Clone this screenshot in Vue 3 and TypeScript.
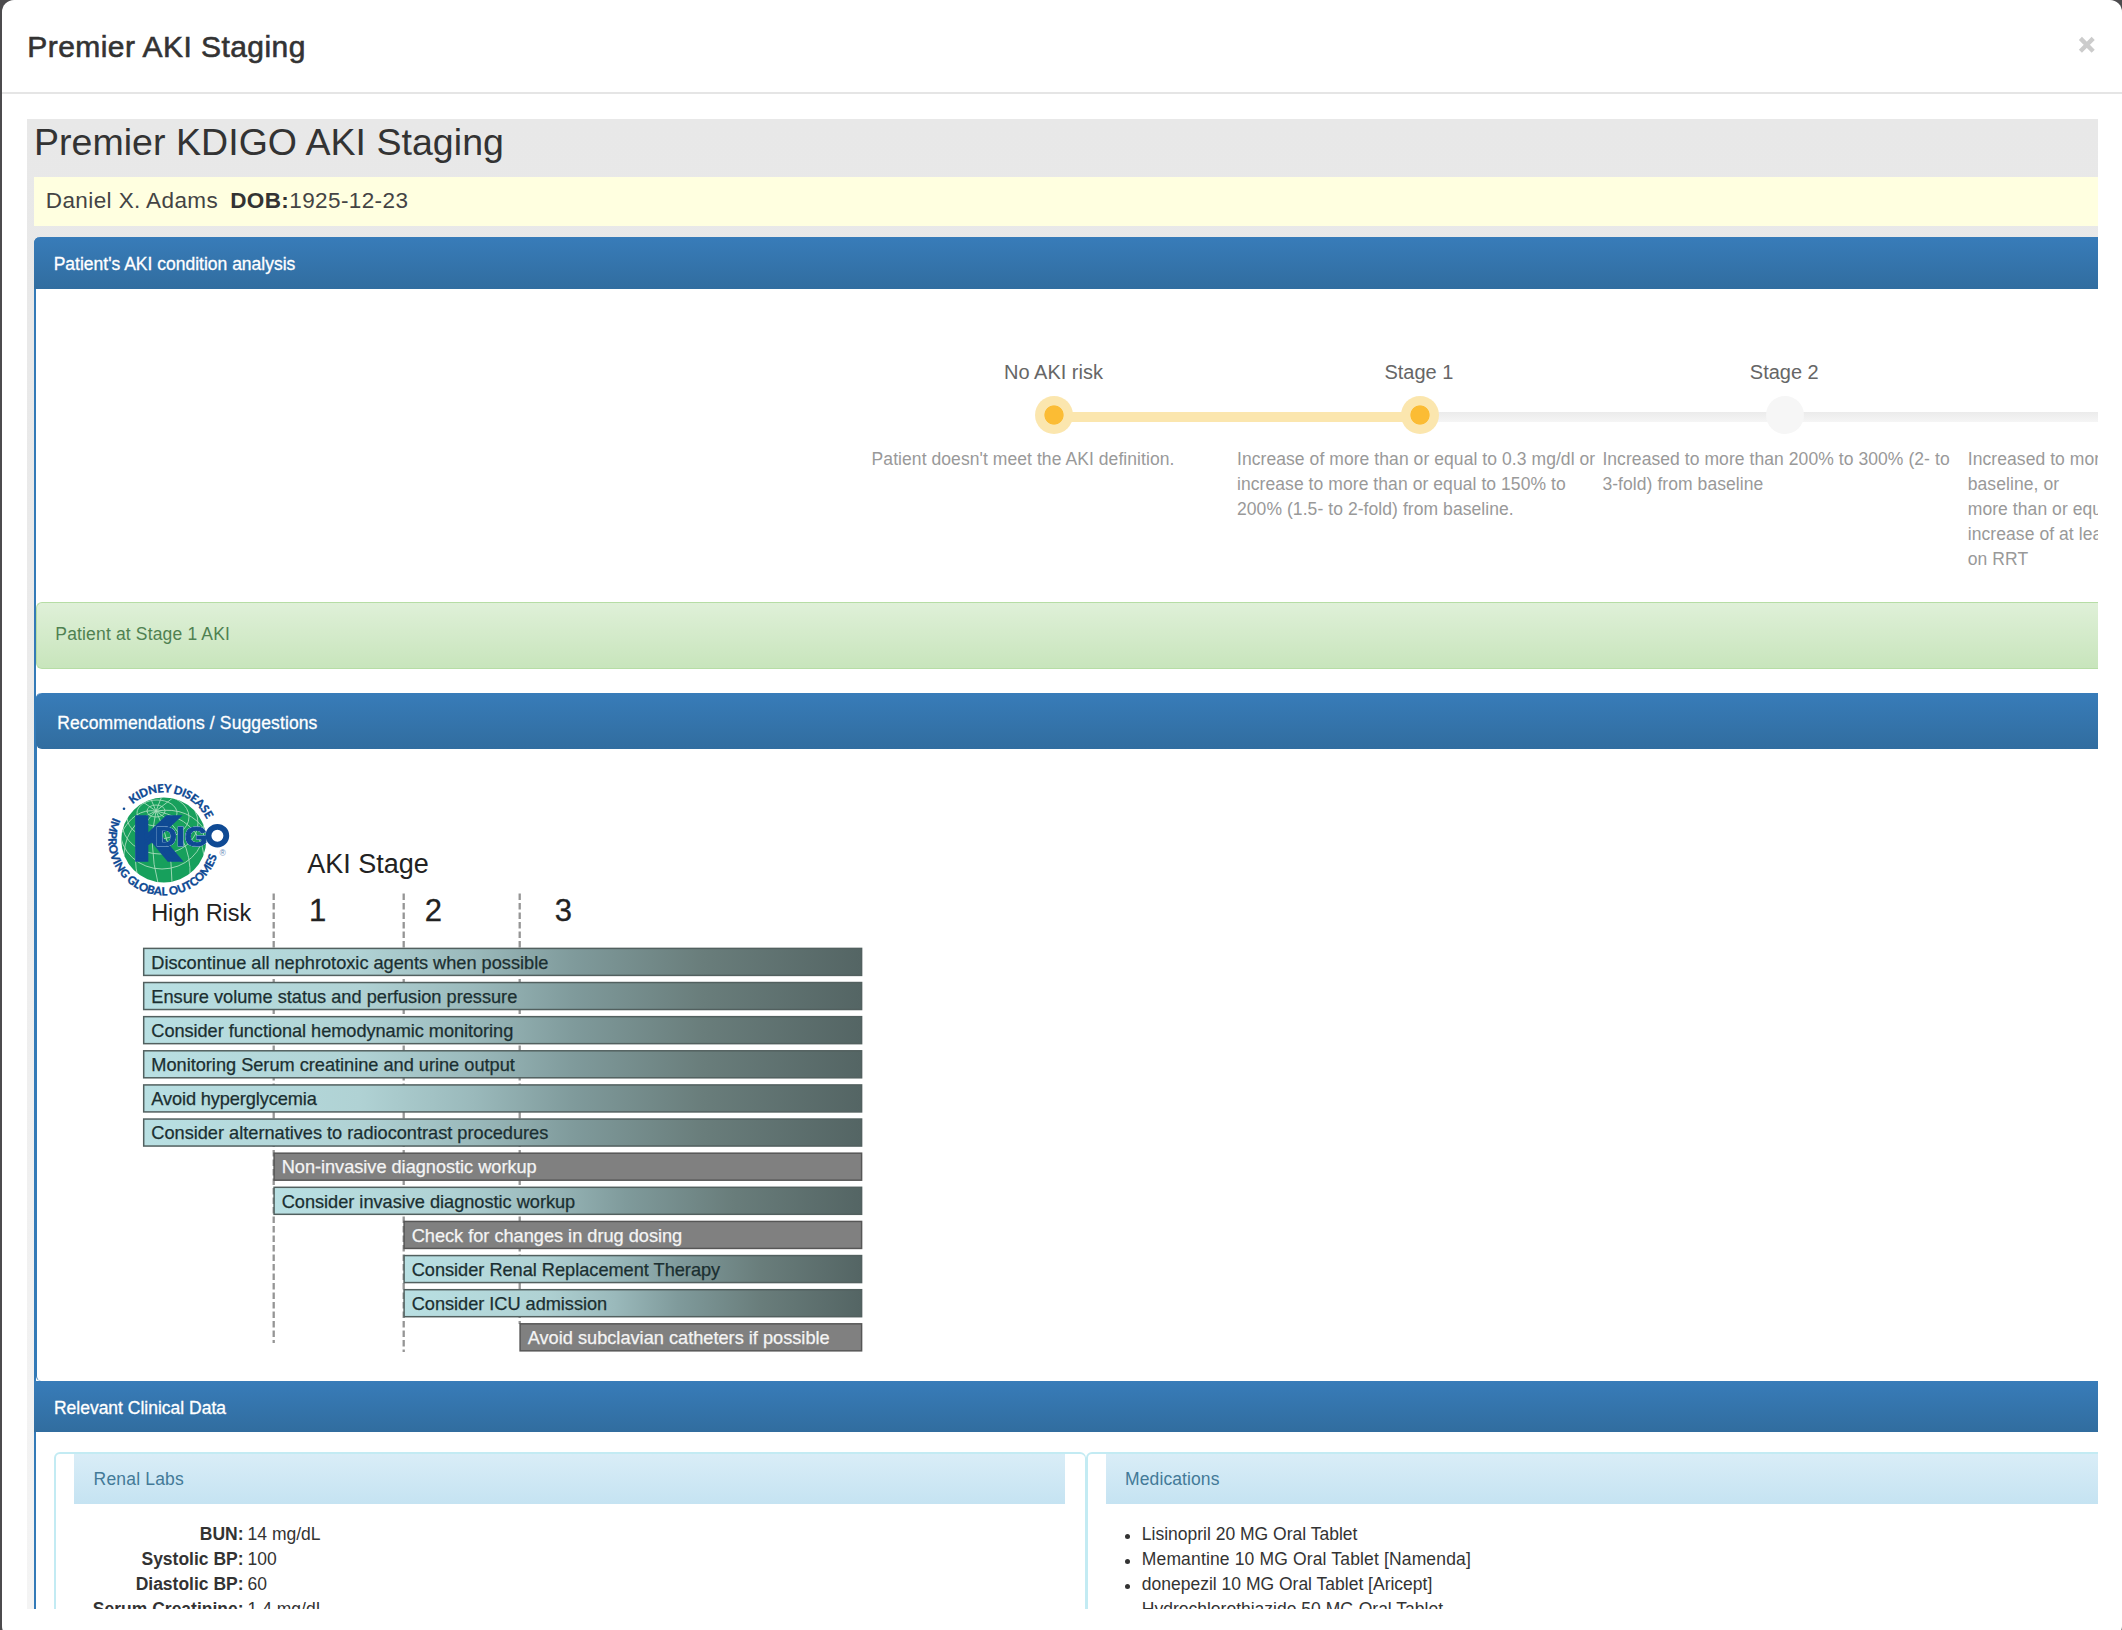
<script setup lang="ts">
interface Stage {
  title: string
  lines: string[]
  reached: boolean
  joined: boolean
}

interface ChartBar {
  label: string
  start: number
  width: number
  dark?: boolean
}

const stages: Stage[] = [
  { title: 'No AKI risk', lines: ["Patient doesn't meet the AKI definition."], reached: true, joined: true },
  {
    title: 'Stage 1',
    lines: [
      'Increase of more than or equal to 0.3 mg/dl or',
      'increase to more than or equal to 150% to',
      '200% (1.5- to 2-fold) from baseline.',
    ],
    reached: true,
    joined: false,
  },
  {
    title: 'Stage 2',
    lines: ['Increased to more than 200% to 300% (2- to', '3-fold) from baseline'],
    reached: false,
    joined: false,
  },
  {
    title: 'Stage 3',
    lines: [
      'Increased to more than 300% (3-fold) from',
      'baseline, or',
      'more than or equal to 4.0 mg/dl with an acute',
      'increase of at least 0.5 mg/dl or',
      'on RRT',
    ],
    reached: false,
    joined: false,
  },
]

const chartRight = 862.3
const barTop = (i: number): number => 947.7 + i * 34.13

const bars: ChartBar[] = [
  { label: 'Discontinue all nephrotoxic agents when possible', start: 143, width: 397 },
  { label: 'Ensure volume status and perfusion pressure', start: 143, width: 366 },
  { label: 'Consider functional hemodynamic monitoring', start: 143, width: 362 },
  { label: 'Monitoring Serum creatinine and urine output', start: 143, width: 363.5 },
  { label: 'Avoid hyperglycemia', start: 143, width: 165.5 },
  { label: 'Consider alternatives to radiocontrast procedures', start: 143, width: 397 },
  { label: 'Non-invasive diagnostic workup', start: 273.4, width: 255, dark: true },
  { label: 'Consider invasive diagnostic workup', start: 273.4, width: 293.5 },
  { label: 'Check for changes in drug dosing', start: 403.4, width: 270.5, dark: true },
  { label: 'Consider Renal Replacement Therapy', start: 403.4, width: 308.5 },
  { label: 'Consider ICU admission', start: 403.4, width: 195.5 },
  { label: 'Avoid subclavian catheters if possible', start: 519.4, width: 302, dark: true },
]

const guides = [
  { x: 273.7, end: 1343 },
  { x: 403.7, end: 1352 },
  { x: 519.7, end: 1324 },
]

const labs = [
  { name: 'BUN:', value: '14 mg/dL' },
  { name: 'Systolic BP:', value: '100' },
  { name: 'Diastolic BP:', value: '60' },
  { name: 'Serum Creatinine:', value: '1.4 mg/dL' },
]

const medications = [
  'Lisinopril 20 MG Oral Tablet',
  'Memantine 10 MG Oral Tablet [Namenda]',
  'donepezil 10 MG Oral Tablet [Aricept]',
  'Hydrochlorothiazide 50 MG Oral Tablet',
]
</script>

<template>
  <div class="backdrop">
    <section class="modal">
      <header class="modal-header">
        <h2>Premier AKI Staging</h2>
        <button class="close" aria-label="Close">
          <svg width="18" height="18" viewBox="0 0 18 18">
            <path d="M2.4 2.4 L15.2 15.2 M15.2 2.4 L2.4 15.2" stroke="#ccc" stroke-width="4.4" />
          </svg>
        </button>
      </header>

      <main class="viewport">
        <h1>Premier KDIGO AKI Staging</h1>
        <div class="patient">
          <span class="name">Daniel X. Adams</span><b>DOB:</b><span>1925-12-23</span>
        </div>

        <div class="panel">
          <div class="panel-heading first">Patient's AKI condition analysis</div>

          <div class="steps">
            <div v-for="s in stages" :key="s.title" class="step">
              <div class="step-title">{{ s.title }}</div>
              <div class="node-row">
                <span class="half" :class="{ none: s.title === 'No AKI risk', on: s.title === 'Stage 1' }"></span>
                <span class="node" :class="{ on: s.reached }"></span>
                <span class="half" :class="{ on: s.joined }"></span>
              </div>
              <p><span v-for="l in s.lines" :key="l">{{ l }}</span></p>
            </div>
          </div>

          <div class="alert">Patient at Stage 1 AKI</div>

          <div class="advice">
            <div class="panel-heading nested">Recommendations / Suggestions</div>
            <svg class="chart" width="900" height="632" viewBox="37 749 900 632">
              <defs>
                <linearGradient id="teal">
                  <stop offset="0" stop-color="#b9e0e3" />
                  <stop offset="0.3" stop-color="#b0d2d4" />
                  <stop offset="0.46" stop-color="#9ab9bb" />
                  <stop offset="0.6" stop-color="#7f9a9b" />
                  <stop offset="0.78" stop-color="#697d7b" />
                  <stop offset="1" stop-color="#546564" />
                </linearGradient>
                <clipPath id="globe"><circle cx="163.8" cy="840" r="42.5" /></clipPath>
                <path id="ring-top" d="M132.6 804.2 A47.5 47.5 0 0 1 207.5 821.4" />
                <path id="ring-bottom" d="M113.1 817.4 A55.5 55.5 0 1 0 217.4 854.4" />
              </defs>

              <g class="logo">
                <circle cx="163.8" cy="840" r="42.5" fill="#17a05c" />
                <g clip-path="url(#globe)" fill="none" stroke="#a9dcbc" stroke-width="0.9">
                  <ellipse cx="156" cy="811" rx="9" ry="6" />
                  <ellipse cx="157" cy="813" rx="20" ry="13" />
                  <ellipse cx="158" cy="817" rx="31" ry="22" />
                  <ellipse cx="160" cy="823" rx="38" ry="31" />
                  <ellipse cx="162" cy="830" rx="42" ry="39" />
                  <path d="M156 811 Q148 845 158 883 M156 811 Q172 842 172 883 M156 811 Q192 835 190 878 M156 811 Q200 820 204 856 M156 811 Q190 806 206 832 M156 811 Q128 838 138 878 M156 811 Q122 825 124 862 M156 811 Q134 808 121 834 M156 811 L150 797 M156 811 L162 796 M156 811 L174 797 M156 811 L140 800" />
                </g>
                <text class="big-k" x="132.4" y="860" textLength="48" lengthAdjust="spacingAndGlyphs">K</text>
                <text class="digo" x="155.5" y="845.6" textLength="52" lengthAdjust="spacingAndGlyphs">DIG</text>
                <circle cx="217.4" cy="835.7" r="8.9" fill="#fff" stroke="#0f4a94" stroke-width="5.8" />
                <text class="ring"><textPath href="#ring-top" textLength="87" lengthAdjust="spacing">KIDNEY DISEASE</textPath></text>
                <text class="ring"><textPath href="#ring-bottom" textLength="181" lengthAdjust="spacing">IMPROVING GLOBAL OUTCOMES</textPath></text>
                <circle cx="124" cy="808.7" r="1.3" fill="#0f4a94" />
                <text class="reg" x="219.6" y="856">®</text>
              </g>

              <text class="t-stage" x="307.3" y="872.5" textLength="121.5">AKI Stage</text>
              <text class="t-risk" x="151.2" y="921" textLength="100">High Risk</text>
              <text class="t-num" x="309" y="921.4">1</text>
              <text class="t-num" x="424.8" y="921.4">2</text>
              <text class="t-num" x="554.8" y="921.4">3</text>

              <line
                v-for="g in guides"
                :key="g.x"
                :x1="g.x"
                :x2="g.x"
                y1="893.5"
                :y2="g.end"
                stroke="#959595"
                stroke-width="2.3"
                stroke-dasharray="6.5 3"
              />

              <g v-for="(b, i) in bars" :key="b.label">
                <rect
                  :x="b.start + 0.7"
                  :y="barTop(i) + 0.7"
                  :width="chartRight - b.start - 1.4"
                  height="27"
                  :fill="b.dark ? '#808080' : 'url(#teal)'"
                  :stroke="b.dark ? '#565656' : '#52605f'"
                  stroke-width="1.5"
                />
                <text
                  :class="['t-bar', { light: b.dark }]"
                  :x="b.start + 8.3"
                  :y="barTop(i) + 20.9"
                  :textLength="b.width"
                >{{ b.label }}</text>
              </g>
            </svg>
          </div>

          <div class="panel-heading data">Relevant Clinical Data</div>
          <div class="cards">
            <div class="card labs">
              <div class="card-heading">Renal Labs</div>
              <dl>
                <div v-for="l in labs" :key="l.name">
                  <dt>{{ l.name }}</dt>
                  <dd>{{ l.value }}</dd>
                </div>
              </dl>
            </div>
            <div class="card meds">
              <div class="card-heading">Medications</div>
              <ul>
                <li v-for="m in medications" :key="m"><i></i>{{ m }}</li>
              </ul>
            </div>
          </div>
        </div>
      </main>
    </section>
  </div>
</template>

<style>
body {
  margin: 0;
  background: #4c4b4d;
}
</style>

<style scoped>
* {
  box-sizing: border-box;
}
.backdrop {
  width: 2122px;
  height: 1630px;
  overflow: hidden;
  padding-left: 2px;
  background: #4c4b4d;
  font-family: 'Liberation Sans', Arial, sans-serif;
  font-size: 17.5px;
  line-height: 25px;
  color: #333;
}
.modal {
  height: 1638px;
  background: #fff;
  border-radius: 12px;
}
.modal-header {
  display: flex;
  justify-content: space-between;
  align-items: center;
  height: 94px;
  padding: 0 26px 0 25.3px;
  border-bottom: 2px solid #e5e5e5;
}
h2 {
  margin: 0;
  padding-top: 2px;
  font-size: 30px;
  font-weight: 400;
  line-height: 92px;
  letter-spacing: 0.44px;
  -webkit-text-stroke: 0.6px #333;
}
.close {
  display: flex;
  margin: 0 0 3px;
  padding: 0;
  border: 0;
  background: none;
}
.viewport {
  width: 2071px;
  height: 1490px;
  margin: 25px 0 0 25px;
  padding-left: 7px;
  overflow: hidden;
  background: linear-gradient(#e8e8e8, #eaeaea 30%, #f4f4f4);
}
h1 {
  height: 58px;
  margin: 0;
  font-size: 37.5px;
  font-weight: 400;
  line-height: 47px;
  letter-spacing: 0.04px;
}
.patient {
  display: flex;
  height: 48.5px;
  padding-left: 11.8px;
  background: #ffffe0;
  font-size: 22.5px;
  line-height: 48px;
  letter-spacing: 0.4px;
  color: #444;
}
.patient .name {
  margin-right: 12px;
}
.patient b {
  color: #333;
}
.panel {
  height: 1500px;
  margin-top: 11.5px;
  border-left: 2px solid #337ab7;
  border-radius: 6px 0 0 0;
  background: #fff;
}
.panel-heading {
  display: flex;
  align-items: center;
  padding-top: 3px;
  color: #fff;
  background: linear-gradient(#387cb9, #316d9f);
  -webkit-text-stroke: 0.3px #fff;
}
.first {
  height: 52px;
  margin-left: -2px;
  padding-left: 19.7px;
  border-radius: 6px 0 0 0;
}
.steps {
  display: flex;
  height: 313px;
  padding: 68px 0 0 835.6px;
}
.step {
  flex: none;
  width: 365.4px;
}
.step-title {
  padding-right: 1.6px;
  font-size: 20px;
  line-height: 30px;
  text-align: center;
  color: #666;
}
.node-row {
  display: flex;
  align-items: center;
  height: 38px;
  margin-top: 8.7px;
}
.half {
  flex: 1;
  height: 10px;
  margin: 4px -3px 0;
  background: linear-gradient(#ebebeb, #f5f5f5);
}
.half:first-child {
  margin-left: 0;
}
.half:last-child {
  margin-right: 0;
}
.half.on {
  background: #fbe6ae;
}
.half.none {
  background: none;
}
.node {
  z-index: 1;
  width: 38px;
  height: 38px;
  border-radius: 50%;
  background: #f6f6f6;
}
.node.on {
  background: radial-gradient(circle, #fbbc34 9.2px, #fbe6ae 10px);
}
.step p {
  display: flex;
  flex-direction: column;
  margin: 13.6px 0 0;
  white-space: nowrap;
  letter-spacing: 0.07px;
  color: #999;
}
.alert {
  display: flex;
  align-items: center;
  height: 67.3px;
  padding: 0 0 2px 18.3px;
  border: 1.4px solid #b6dda5;
  border-right: 0;
  border-radius: 6px 0 0 6px;
  background: linear-gradient(#dff0d8, #c8e5bc);
  color: #4f8151;
  letter-spacing: 0.16px;
}
.advice {
  height: 687.3px;
  margin-top: 24.2px;
  border-left: 1px solid #337ab7;
  border-radius: 5px 0 0 5px;
}
.nested {
  height: 55.5px;
  margin-left: -1px;
  padding: 4px 0 0 21.2px;
  border-radius: 6px 0 0 6px;
  letter-spacing: 0.12px;
}
.chart {
  display: block;
}
.chart text {
  font-family: 'Liberation Sans', Arial, sans-serif;
  fill: #222;
}
.chart .t-stage {
  font-size: 27px;
}
.chart .t-risk {
  font-size: 23.5px;
}
.chart .t-num {
  font-size: 31px;
  stroke: #222;
  stroke-width: 0.3px;
}
.chart .t-bar {
  font-size: 18.2px;
  fill: #1b2f31;
  stroke: #1b2f31;
  stroke-width: 0.25px;
}
.chart .t-bar.light {
  fill: #f4f4f4;
  stroke: #f4f4f4;
}
.chart .logo text {
  fill: #0f4a94;
  font-weight: 700;
}
.logo .big-k {
  font-size: 63px;
  stroke: #0f4a94;
  stroke-width: 3.4px;
}
.logo .digo {
  font-size: 27px;
  stroke: #0f4a94;
  stroke-width: 1.1px;
  filter: drop-shadow(0 0 0.5px #d5e8f5) drop-shadow(0 0 0.4px #a9cbe6);
}
.chart .logo .ring {
  font-family: Lato, sans-serif;
  font-size: 11.4px;
  font-weight: 900;
  stroke: #0f4a94;
  stroke-width: 0.25px;
}
.chart .logo .reg {
  font-size: 8.5px;
  font-weight: 400;
  fill: #5d87b8;
}
.data {
  height: 51.7px;
  margin-left: -2px;
  padding-left: 19.9px;
}
.cards {
  display: flex;
  margin: 19.7px 0 0 18px;
}
.card {
  flex: none;
  height: 300px;
  border: 2px solid #c3ebf3;
  border-radius: 6px;
}
.labs {
  width: 1032px;
  padding: 0 19.8px 0 17.6px;
  border-right-width: 1px;
}
.meds {
  width: 1100px;
  padding-left: 18.2px;
}
.card-heading {
  display: flex;
  align-items: center;
  height: 49.8px;
  padding: 1px 0 0 18.9px;
  background: linear-gradient(#d9edf7, #c5e3f2);
  color: #437a98;
  letter-spacing: 0.1px;
}
.labs .card-heading {
  padding-left: 20px;
  letter-spacing: 0.18px;
}
dl {
  margin: 18.4px 0 0;
}
dl div {
  display: flex;
  gap: 4px;
}
dt {
  width: 170px;
  text-align: right;
  white-space: nowrap;
  font-weight: 700;
}
dd {
  margin: 0;
}
ul {
  margin: 18.4px 0 0;
  padding: 0 0 0 19px;
  list-style: none;
}
li {
  display: flex;
  align-items: center;
}
li:nth-child(2) {
  letter-spacing: 0.15px;
}
li i {
  width: 5px;
  height: 5px;
  margin: 3px 11.6px 0 0;
  border-radius: 50%;
  background: #333;
}
li:last-child i {
  visibility: hidden;
}
</style>
